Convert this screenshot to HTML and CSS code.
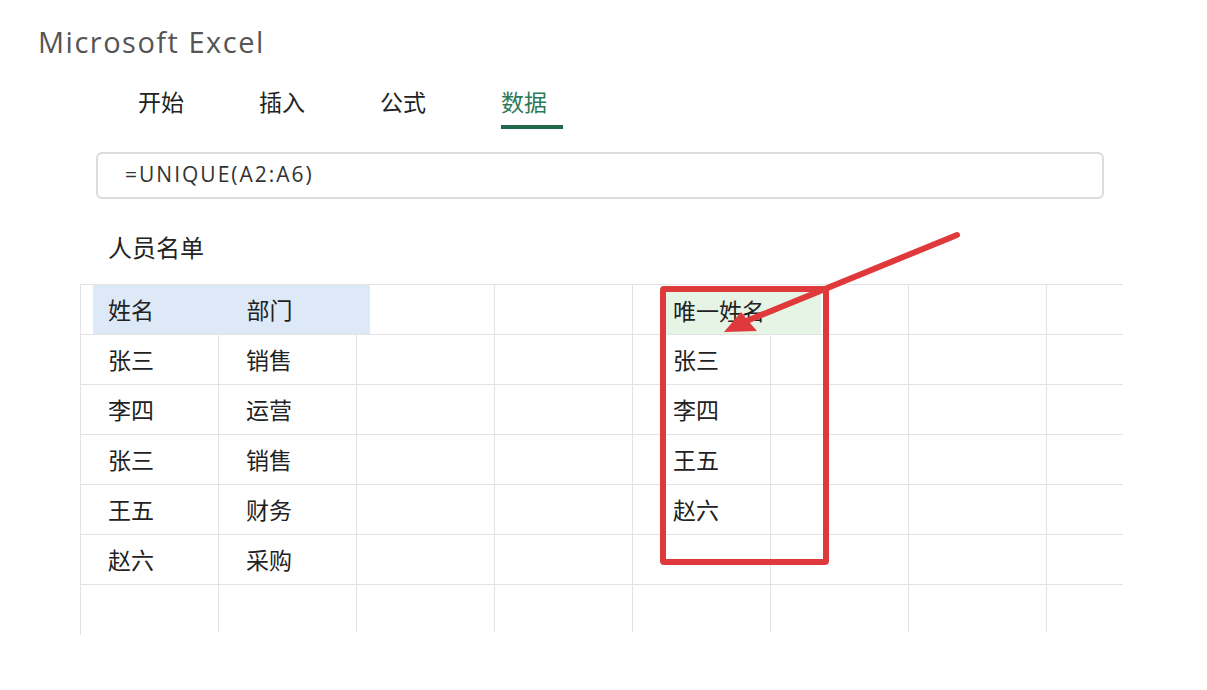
FILE: index.html
```html
<!DOCTYPE html>
<html>
  <head>
    <title>Microsoft Excel - UNIQUE</title>
    <meta charset="UTF-8">
    <link rel="stylesheet" href="styles.css">
  </head>

  <body>
    <div class="app">
      <h1 class="app-title">Microsoft Excel</h1>

      <nav class="tabs">
        <span class="tab">开始</span>
        <span class="tab">插入</span>
        <span class="tab">公式</span>
        <span class="tab active">数据</span>
      </nav>

      <div class="formula-bar">=UNIQUE(A2:A6)</div>

      <h2 class="sheet-title">人员名单</h2>

      <div class="sheet">
        <!-- row 1 -->
        <div class="cell span-3">
          <div class="head-blue"><span>姓名</span><span>部门</span></div>
        </div>
        <div class="cell"></div>
        <div class="cell span-2">
          <div class="head-green">唯一姓名</div>
        </div>
        <div class="cell"></div>
        <div class="cell last"></div>

        <!-- row 2 -->
        <div class="cell">张三</div>
        <div class="cell">销售</div>
        <div class="cell"></div>
        <div class="cell"></div>
        <div class="cell result">张三</div>
        <div class="cell"></div>
        <div class="cell"></div>
        <div class="cell last"></div>

        <!-- row 3 -->
        <div class="cell">李四</div>
        <div class="cell">运营</div>
        <div class="cell"></div>
        <div class="cell"></div>
        <div class="cell result">李四</div>
        <div class="cell"></div>
        <div class="cell"></div>
        <div class="cell last"></div>

        <!-- row 4 -->
        <div class="cell">张三</div>
        <div class="cell">销售</div>
        <div class="cell"></div>
        <div class="cell"></div>
        <div class="cell result">王五</div>
        <div class="cell"></div>
        <div class="cell"></div>
        <div class="cell last"></div>

        <!-- row 5 -->
        <div class="cell">王五</div>
        <div class="cell">财务</div>
        <div class="cell"></div>
        <div class="cell"></div>
        <div class="cell result">赵六</div>
        <div class="cell"></div>
        <div class="cell"></div>
        <div class="cell last"></div>

        <!-- row 6 -->
        <div class="cell">赵六</div>
        <div class="cell">采购</div>
        <div class="cell"></div>
        <div class="cell"></div>
        <div class="cell"></div>
        <div class="cell"></div>
        <div class="cell"></div>
        <div class="cell last"></div>

        <!-- row 7 -->
        <div class="cell end"></div>
        <div class="cell end"></div>
        <div class="cell end"></div>
        <div class="cell end"></div>
        <div class="cell end"></div>
        <div class="cell end"></div>
        <div class="cell end"></div>
        <div class="cell end last"></div>
      </div>

      <div class="highlight"></div>

      <svg class="arrow" width="1207" height="690" viewBox="0 0 1207 690">
        <line x1="957" y1="235" x2="744" y2="322" stroke="#e0393b" stroke-width="6" stroke-linecap="round"/>
        <polygon points="724,332 741,312 750,323 757,331" fill="#e0393b"/>
      </svg>
    </div>
  </body>
</html>
```

FILE: styles.css
```css
body {
  margin: 0;
  padding: 0;
  background-color: #fff;
  font-family: "Noto Sans CJK SC", "Noto Sans", sans-serif;
  color: #222;
}

.app {
  position: relative;
  width: 1207px;
  height: 690px;
  overflow: hidden;
}

.app-title {
  margin: 0;
  padding: 22px 0 0 38px;
  font-family: "Open Sans", "DejaVu Sans", sans-serif;
  font-size: 29px;
  font-weight: 400;
  letter-spacing: 1.5px;
  line-height: 40px;
  color: #555;
}

.tabs {
  display: flex;
  margin: 22px 0 0 138px;
}

.tab {
  position: relative;
  width: 121px;
  font-size: 23px;
  line-height: 34px;
  color: #222;
}

.tab.active {
  color: #2d7a5a;
}

.tab.active::after {
  content: "";
  position: absolute;
  left: 0;
  top: 41px;
  width: 62px;
  height: 4px;
  background-color: #1f6b4c;
}

.formula-bar {
  box-sizing: border-box;
  width: 1008px;
  height: 47px;
  margin: 34px 0 0 96px;
  padding-left: 27px;
  border: 2px solid #dcdcdc;
  border-radius: 6px;
  font-family: "Open Sans", sans-serif;
  font-size: 21px;
  letter-spacing: 2px;
  line-height: 40px;
  color: #333;
}

.sheet-title {
  margin: 33px 0 0 108px;
  font-size: 24px;
  font-weight: normal;
  line-height: 30px;
  color: #222;
}

.sheet {
  display: grid;
  grid-template-columns: repeat(7, 138px) 76px;
  grid-auto-rows: 50px;
  width: 1042px;
  margin: 22px 0 0 80px;
  border-top: 1px solid #e3e3e3;
  border-left: 1px solid #e3e3e3;
}

.cell {
  box-sizing: border-box;
  padding-left: 27px;
  border-right: 1px solid #e3e3e3;
  border-bottom: 1px solid #e3e3e3;
  font-size: 23px;
  line-height: 48px;
}

.cell.result {
  padding-left: 40px;
}

.cell.last {
  border-right: none;
}

.cell.end {
  height: 47px;
  border-bottom: none;
}

.span-3 {
  grid-column: span 3;
  padding-left: 12px;
}

.span-2 {
  grid-column: span 2;
  padding-left: 31px;
}

.head-blue {
  display: flex;
  width: 277px;
  height: 49px;
  background-color: #dde9f7;
}

.head-blue span {
  width: 138px;
  padding-left: 15px;
}

.head-green {
  width: 157px;
  height: 45px;
  margin-top: 4px;
  padding-left: 9px;
  box-sizing: border-box;
  background-color: #e6f4e6;
  line-height: 42px;
}

.highlight {
  position: absolute;
  left: 660px;
  top: 286px;
  width: 157px;
  height: 267px;
  border: 6px solid #de3a3c;
  border-radius: 4px;
}

.arrow {
  position: absolute;
  left: 0;
  top: 0;
  pointer-events: none;
}
```
